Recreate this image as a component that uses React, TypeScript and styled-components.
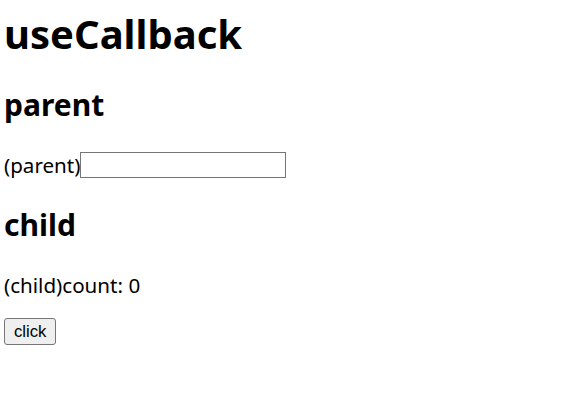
import { useState, useCallback } from 'react';
import styled, { createGlobalStyle } from 'styled-components';

const Global = createGlobalStyle`
  body {
    margin: 0;
    font-family: "Noto Sans", "Open Sans", sans-serif;
    color: #000;
    background: #fff;
  }
`;

const Page = styled.div`
  padding: 0 4px;
`;

const Title = styled.h1`
  font-size: 40px;
  line-height: 48px;
  font-weight: 700;
  margin: 10px 0 29px;
`;

const Section = styled.h2`
  font-size: 30px;
  line-height: 36px;
  font-weight: 700;
  margin: 29px 0;
`;

const Line = styled.p`
  font-size: 20.6px;
  line-height: 26px;
  margin: 20px 0;
  display: flex;
  align-items: center;
`;

const Field = styled.input`
  box-sizing: border-box;
  width: 206px;
  height: 26px;
  border: 1px solid #767676;
  border-radius: 0;
  padding: 1px 2px;
  margin: 0;
  font-size: 16px;
`;

const Btn = styled.button`
  box-sizing: border-box;
  font-family: "Liberation Sans", Arial, sans-serif;
  font-size: 16.7px;
  line-height: 19px;
  height: 27px;
  padding: 3px 9px;
  margin: 0;
  background: #efefef;
  border: 1px solid #767676;
  border-radius: 3px;
  color: #000;
`;

function Child({ count, onClick }: { count: number; onClick: () => void }) {
  return (
    <div>
      <Section>child</Section>
      <Line>(child)count: {count}</Line>
      <Btn onClick={onClick}>click</Btn>
    </div>
  );
}

export default function App() {
  const [text, setText] = useState('');
  const [count, setCount] = useState(0);
  const inc = useCallback(() => setCount(c => c + 1), []);
  return (
    <Page>
      <Global />
      <Title>useCallback</Title>
      <Section>parent</Section>
      <Line>
        (parent)<Field value={text} onChange={e => setText(e.target.value)} />
      </Line>
      <Child count={count} onClick={inc} />
    </Page>
  );
}
